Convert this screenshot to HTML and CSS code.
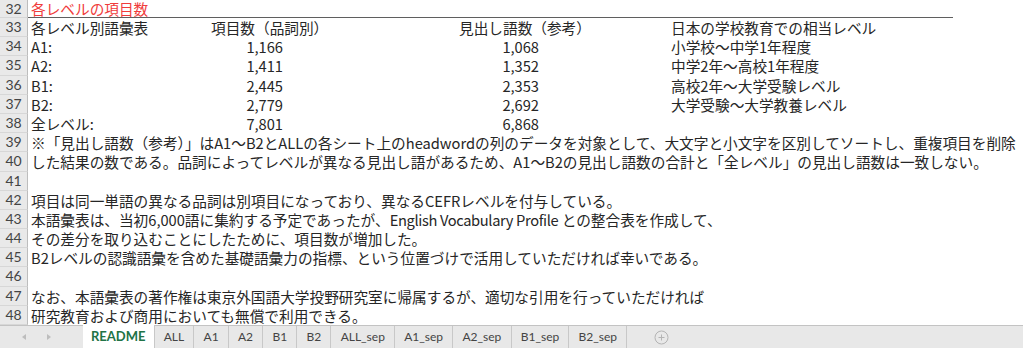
FILE: index.html
```html
<!DOCTYPE html>
<html lang="ja">
<head>
  <meta charset="UTF-8" />
  <title>README</title>
  <link rel="stylesheet" href="styles.css">
</head>
<body>
  <div class="sheet">
    <div class="row first"><div class="rh">32</div><div class="cells"><span class="title">各レベルの項目数</span></div></div>
    <div class="row"><div class="rh">33</div><div class="cells"><span>各レベル別語彙表</span><span>項目数（品詞別）</span><span></span><span>見出し語数（参考）</span><span></span><span>日本の学校教育での相当レベル</span></div></div>
    <div class="row"><div class="rh">34</div><div class="cells"><span>A1:</span><span class="num">1,166</span><span></span><span class="num">1,068</span><span></span><span>小学校～中学1年程度</span></div></div>
    <div class="row"><div class="rh">35</div><div class="cells"><span>A2:</span><span class="num">1,411</span><span></span><span class="num">1,352</span><span></span><span>中学2年～高校1年程度</span></div></div>
    <div class="row"><div class="rh">36</div><div class="cells"><span>B1:</span><span class="num">2,445</span><span></span><span class="num">2,353</span><span></span><span>高校2年～大学受験レベル</span></div></div>
    <div class="row"><div class="rh">37</div><div class="cells"><span>B2:</span><span class="num">2,779</span><span></span><span class="num">2,692</span><span></span><span>大学受験～大学教養レベル</span></div></div>
    <div class="row"><div class="rh">38</div><div class="cells"><span>全レベル:</span><span class="num">7,801</span><span></span><span class="num">6,868</span></div></div>
    <div class="row"><div class="rh">39</div><div class="long">※「見出し語数（参考）」はA1～B2とALLの各シート上のheadwordの列のデータを対象として、大文字と小文字を区別してソートし、重複項目を削除</div></div>
    <div class="row"><div class="rh">40</div><div class="long">した結果の数である。品詞によってレベルが異なる見出し語があるため、A1～B2の見出し語数の合計と「全レベル」の見出し語数は一致しない。</div></div>
    <div class="row"><div class="rh">41</div><div class="long"></div></div>
    <div class="row"><div class="rh">42</div><div class="long">項目は同一単語の異なる品詞は別項目になっており、異なるCEFRレベルを付与している。</div></div>
    <div class="row"><div class="rh">43</div><div class="long">本語彙表は、当初6,000語に集約する予定であったが、<span class="lat">English Vocabulary Profile</span> との整合表を作成して、</div></div>
    <div class="row"><div class="rh">44</div><div class="long">その差分を取り込むことにしたために、項目数が増加した。</div></div>
    <div class="row"><div class="rh">45</div><div class="long">B2レベルの認識語彙を含めた基礎語彙力の指標、という位置づけで活用していただければ幸いである。</div></div>
    <div class="row"><div class="rh">46</div><div class="long"></div></div>
    <div class="row"><div class="rh">47</div><div class="long">なお、本語彙表の著作権は東京外国語大学投野研究室に帰属するが、適切な引用を行っていただければ</div></div>
    <div class="row"><div class="rh">48</div><div class="long">研究教育および商用においても無償で利用できる。</div></div>
  </div>

  <div class="tabs">
    <div class="nav"><span class="arr-l"></span><span class="arr-r"></span></div>
    <div class="tab active">README</div>
    <div class="tab">ALL</div>
    <div class="tab">A1</div>
    <div class="tab">A2</div>
    <div class="tab">B1</div>
    <div class="tab">B2</div>
    <div class="tab">ALL_sep</div>
    <div class="tab">A1_sep</div>
    <div class="tab">A2_sep</div>
    <div class="tab">B1_sep</div>
    <div class="tab">B2_sep</div>
    <div class="add">
      <svg width="15" height="15" viewBox="0 0 15 15"><circle cx="7.5" cy="7.5" r="6.5" fill="none" stroke="#b4b4b4" stroke-width="1"/><path d="M7.5 4.5v6M4.5 7.5h6" stroke="#b4b4b4" stroke-width="1"/></svg>
    </div>
  </div>
</body>
</html>
```

FILE: styles.css
```css
* {
  box-sizing: border-box;
}
body {
  margin: 0;
  height: 348px;
  overflow: hidden;
  background: #fff;
  color: #262626;
  font-family: "Noto Sans CJK JP", sans-serif;
  font-size: 14.67px;
}
.sheet {
  height: 325.2px;
}
.row {
  display: flex;
  height: 19.2px;
}
.row.first {
  height: 18px;
}
.rh {
  flex: none;
  width: 28px;
  background: #e9e9e9;
  border-right: 1px solid #bdbdbd;
  border-bottom: 1px solid #d7d7d7;
  color: #444;
  font-family: Lato, sans-serif;
  font-size: 14px;
  text-align: center;
  line-height: 18.2px;
}
.first .rh {
  line-height: 17px;
}
.cells {
  display: grid;
  grid-template-columns: 180px 78px 170px 86px 126px 1fr;
  white-space: nowrap;
  line-height: 18.2px;
  padding-top: 1px;
}
.cells > span {
  padding: 0 3px;
}
.num {
  text-align: right;
}
.first .cells {
  padding-top: 0;
}
.cells > .title {
  grid-column: 1 / -1;
  width: 925px;
  height: 18px;
  color: #f03c3c;
  border-bottom: 1px solid #5f5f5f;
  line-height: 17px;
}
.long {
  padding: 1px 0 0 3px;
  white-space: nowrap;
  line-height: 18.2px;
}
.lat {
  letter-spacing: -0.35px;
}

/* sheet tabs */
.tabs {
  display: flex;
  height: 22.8px;
  background: #e8e8e8;
  border-top: 1px solid #c3c3c3;
  font-family: Lato, sans-serif;
  font-size: 12px;
  color: #444;
}
.nav {
  width: 83px;
  display: flex;
  align-items: center;
  padding-left: 22px;
  gap: 21px;
}
.arr-l, .arr-r {
  width: 0;
  height: 0;
  border-top: 3px solid transparent;
  border-bottom: 3px solid transparent;
}
.arr-l {
  border-right: 4px solid #bdbdbd;
}
.arr-r {
  border-left: 4px solid #bdbdbd;
}
.tab {
  padding: 0 9.2px;
  line-height: 21px;
  border-right: 1px solid #c8c8c8;
}
.tab.active {
  margin-top: -1px;
  padding: 1px 8px 0;
  background: #fff;
  color: #217346;
  font-weight: bold;
  font-size: 13px;
}
.add {
  display: flex;
  align-items: center;
  margin-left: 27px;
}
```
